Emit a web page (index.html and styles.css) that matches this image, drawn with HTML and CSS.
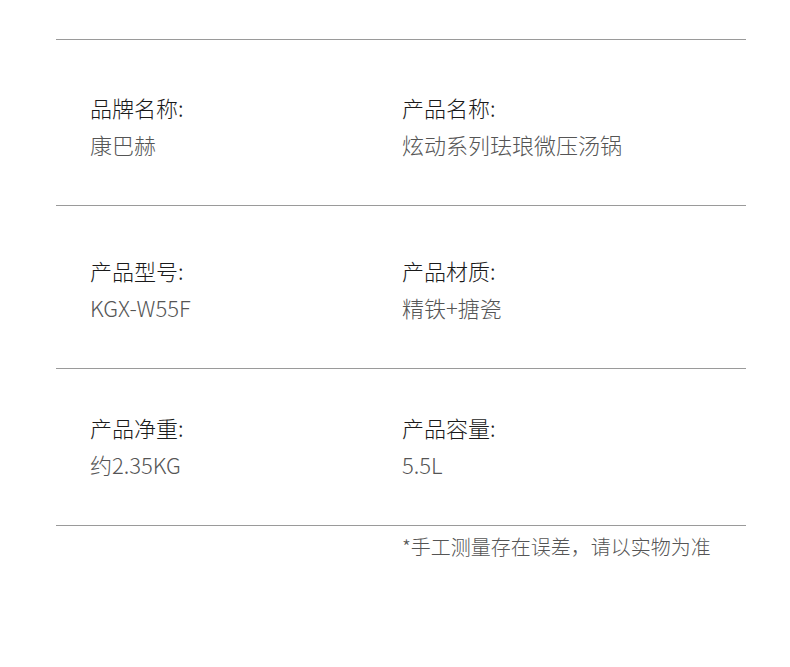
FILE: index.html
```html
<!DOCTYPE html>
<html lang="zh-CN">
<head>
<meta charset="utf-8">
<title>产品参数</title>
<link rel="stylesheet" href="styles.css">
</head>
<body>
<div class="spec">
  <div class="row row-1">
    <div class="cell">
      <div class="label">品牌名称:</div>
      <div class="value">康巴赫</div>
    </div>
    <div class="cell">
      <div class="label">产品名称:</div>
      <div class="value">炫动系列珐琅微压汤锅</div>
    </div>
  </div>
  <div class="row row-2">
    <div class="cell">
      <div class="label">产品型号:</div>
      <div class="value">KGX-W55F</div>
    </div>
    <div class="cell">
      <div class="label">产品材质:</div>
      <div class="value">精铁+搪瓷</div>
    </div>
  </div>
  <div class="row row-3">
    <div class="cell">
      <div class="label">产品净重:</div>
      <div class="value">约2.35KG</div>
    </div>
    <div class="cell">
      <div class="label">产品容量:</div>
      <div class="value">5.5L</div>
    </div>
  </div>
  <div class="note">*手工测量存在误差，请以实物为准</div>
</div>
</body>
</html>
```
FILE: styles.css
```css
html, body {
  margin: 0;
  padding: 0;
  background: #ffffff;
}
body {
  font-family: "Noto Sans CJK SC", "Noto Sans", sans-serif;
  font-weight: 300;
}
.spec {
  width: 690px;
  margin-left: 56px;
  padding-top: 39px;
}
.row {
  display: grid;
  grid-template-columns: 312px 1fr;
  padding-left: 34px;
  border-top: 1px solid #9a9a9a;
  padding-bottom: 42px;
}
.row-1 { padding-top: 49px; }
.row-2 { padding-top: 46px; }
.row-3 { padding-top: 40px; }
.label, .value {
  font-size: 22px;
  line-height: 37px;
}
.label {
  color: #1a1a1a;
}
.value {
  color: #555555;
}
.note {
  border-top: 1px solid #9a9a9a;
  padding: 6px 0 0 346px;
  font-size: 20px;
  line-height: 30px;
  color: #555555;
}
```
